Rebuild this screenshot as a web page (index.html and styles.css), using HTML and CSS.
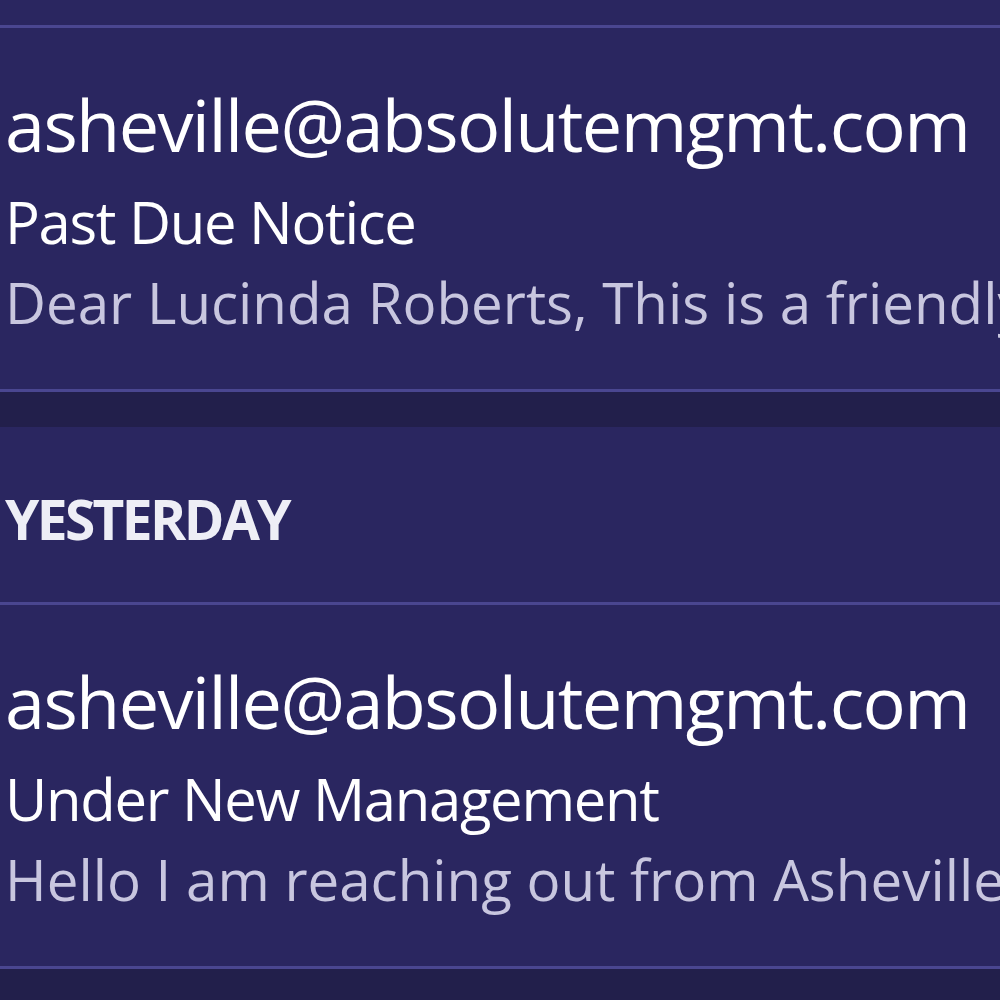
FILE: index.html
```html
<!DOCTYPE html>
<html>
<head>
<meta charset="utf-8">
<link rel="stylesheet" href="styles.css">
</head>
<body>
<div class="list">
  <div class="group">
    <div class="top-spacer"></div>
    <div class="mail">
      <div class="sender">asheville@absolutemgmt.com</div>
      <div class="subject">Past Due Notice</div>
      <div class="preview">Dear Lucinda Roberts, This is a friendly reminder that your rent is past due.</div>
    </div>
  </div>
  <div class="gap"></div>
  <div class="group">
    <div class="section">YESTERDAY</div>
    <div class="mail">
      <div class="sender">asheville@absolutemgmt.com</div>
      <div class="subject">Under New Management</div>
      <div class="preview">Hello I am reaching out from Asheville Property Management to introduce ourselves.</div>
    </div>
  </div>
  <div class="gap"></div>
</div>
</body>
</html>
```

FILE: styles.css
```css
html, body {
  margin: 0;
  padding: 0;
  background: #221f4b;
}
body {
  font-family: "Open Sans", "Noto Sans", sans-serif;
  width: 1000px;
  height: 1000px;
  overflow: hidden;
}
.list {
  display: flex;
  flex-direction: column;
}
.group {
  background: #2a2660;
  border-bottom: 3px solid #4a4690;
}
.top-spacer {
  height: 25px;
}
.mail {
  border-top: 3px solid #4a4690;
  padding: 56px 0 0 5px;
  height: 364px;
  box-sizing: border-box;
  white-space: nowrap;
  overflow: hidden;
}
.sender {
  color: #ffffff;
  font-size: 72px;
  letter-spacing: -1.6px;
  line-height: 80px;
  height: 80px;
}
.subject {
  color: #ffffff;
  font-size: 58px;
  letter-spacing: -1.3px;
  line-height: 64px;
  height: 64px;
  margin-top: 26px;
}
.preview {
  color: #c8c6df;
  font-size: 56.5px;
  line-height: 62px;
  height: 62px;
  margin-top: 18px;
}
.gap {
  height: 35px;
  background: #221f4b;
}
.section {
  height: 175px;
  box-sizing: border-box;
  padding: 62px 0 0 5px;
  color: #eeeef6;
  font-weight: 700;
  font-size: 55px;
  letter-spacing: -2.6px;
  line-height: 60px;
}
```
